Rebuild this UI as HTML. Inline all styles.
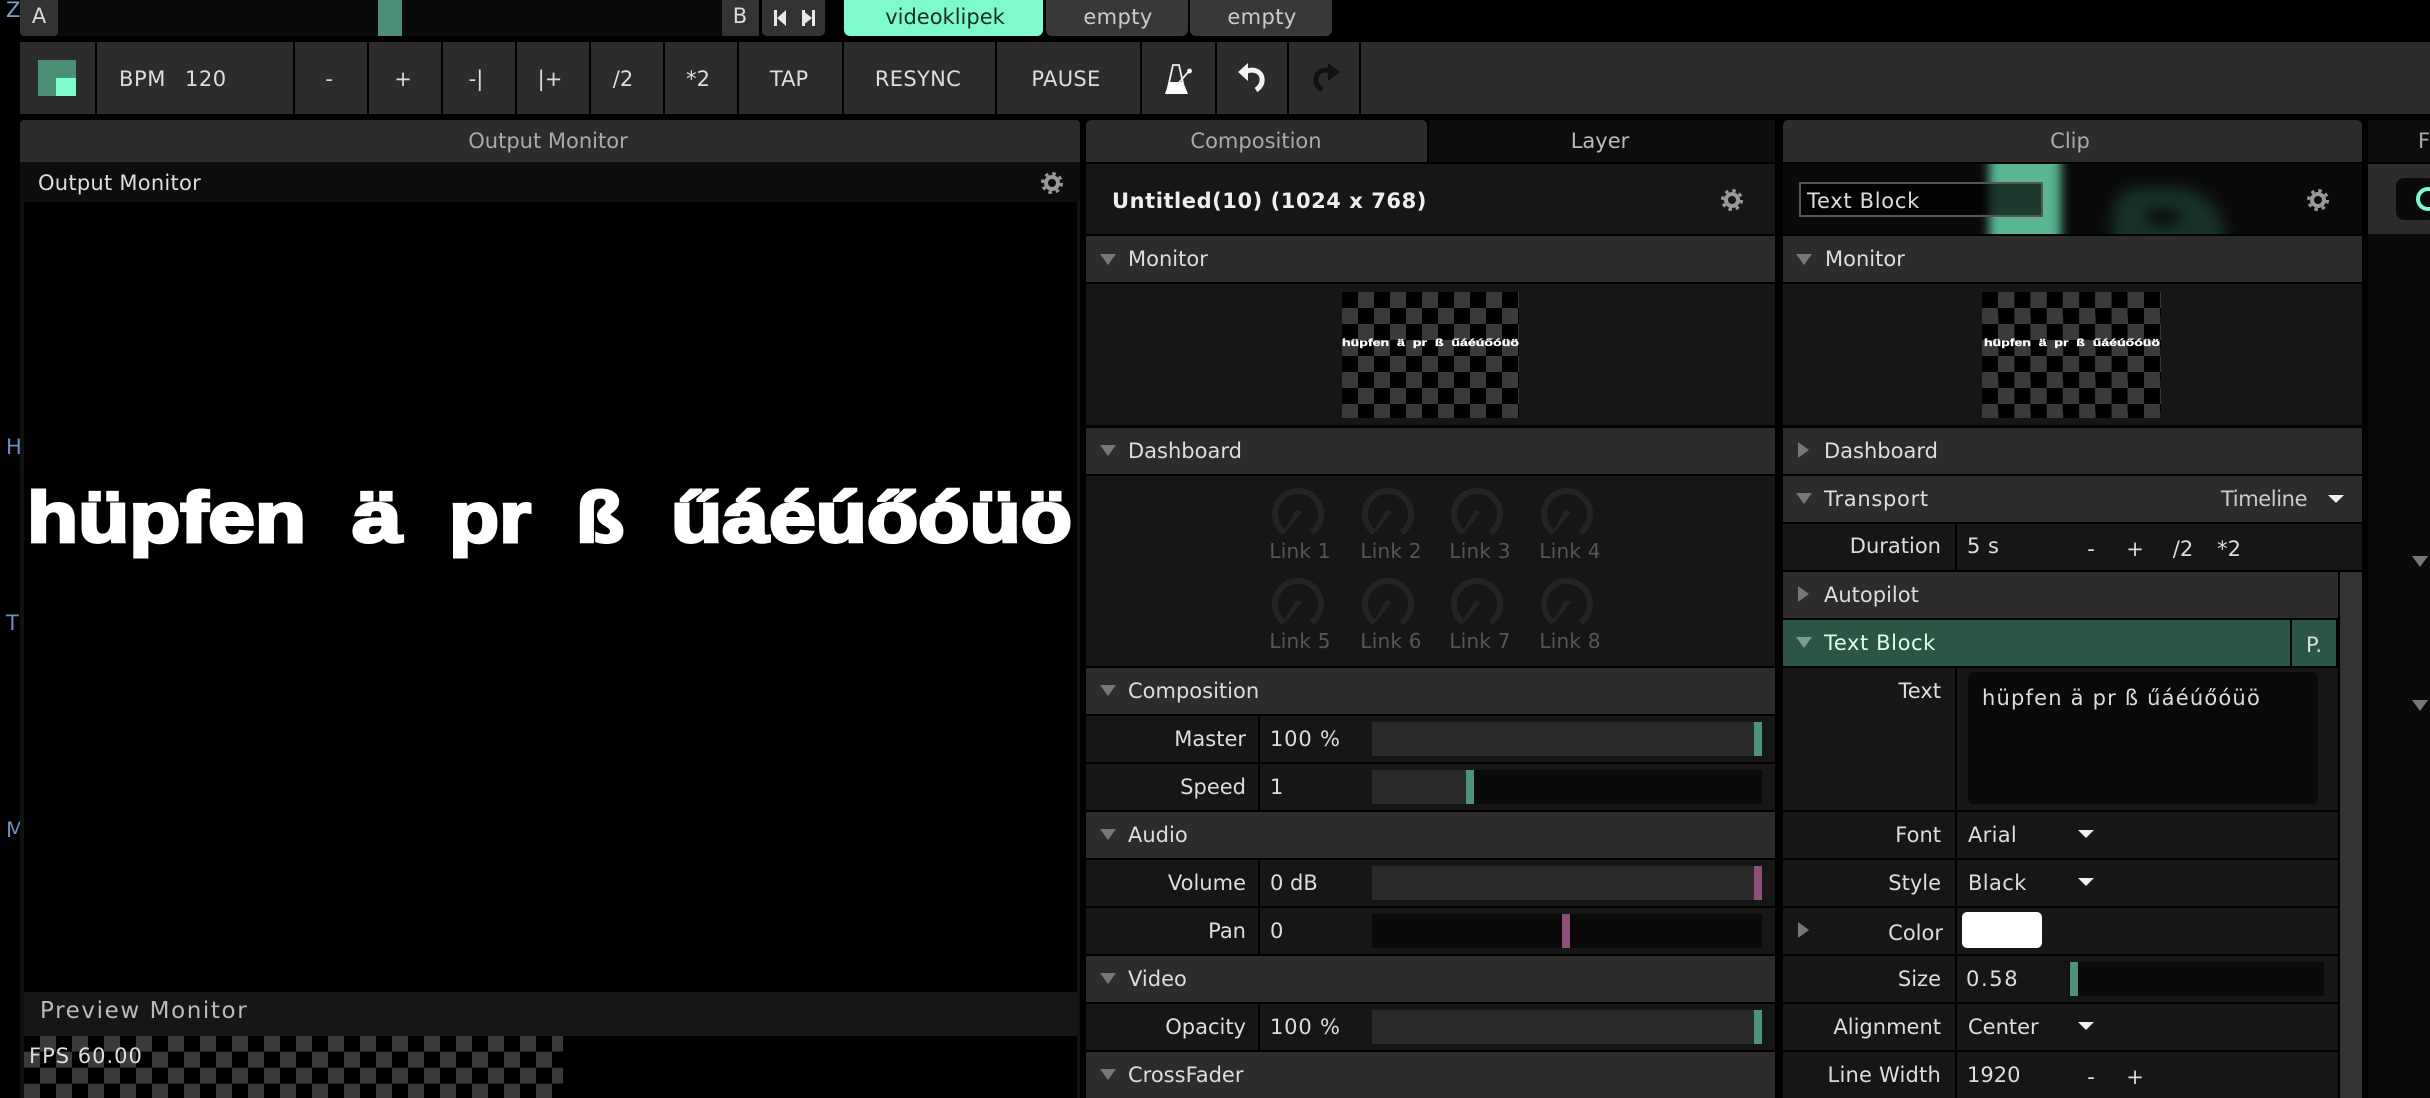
<!DOCTYPE html>
<html lang="en"><head><meta charset="utf-8"><title>Resolume</title>
<style>
html,body{margin:0;padding:0;background:#000}
body{position:relative;width:2430px;height:1098px;overflow:hidden;font-family:"DejaVu Sans","Liberation Sans",sans-serif;font-size:21px;color:#ddd}
div,svg{position:absolute}
.t{height:40px;line-height:40px;white-space:nowrap;margin-top:1px}
.c{transform:translateX(-50%)}
.h{background:#2c2c2c;height:46px}
.b{background:#161616;height:46px}
.tr{width:16px;height:11px;background:#777;clip-path:polygon(0 0,100% 0,50% 100%)}
.tp{width:11px;height:16px;background:#777;clip-path:polygon(0 0,100% 50%,0 100%)}
.dd{width:16px;height:8px;background:#eee;clip-path:polygon(0 0,100% 0,50% 100%)}
.s{width:2px;background:#000}
.sl{height:34px;background:#0a0a0a;overflow:hidden}
.k{width:8px;height:34px;top:0;background:#4e9278}
.p{background:#8f4f79}
.chk{background:conic-gradient(#3a3a3a 25%,#000 0 50%,#3a3a3a 0 75%,#000 0) 0 0/32px 32px}
.lk{color:#565656}
</style></head><body>

<!-- left clipped fragments -->
<div style="left:0;top:0;width:20px;height:1098px;overflow:hidden">
<div class="t" style="left:6px;top:-11px;color:#7c9fd0">Z</div>
<div class="t" style="left:6px;top:426px;color:#6f8fc0">H</div>
<div class="t" style="left:6px;top:602px;color:#6f8fc0">T</div>
<div class="t" style="left:6px;top:809px;color:#6f8fc0">M</div>
</div>

<!-- top bar -->
<div style="left:58px;top:0;width:664px;height:36px;background:#0a0a0a"></div>
<div style="left:20px;top:0;width:38px;height:36px;background:#333;border-radius:0 0 4px 4px"></div>
<div class="t c" style="left:39px;top:-5px">A</div>
<div style="left:378px;top:0;width:24px;height:36px;background:#4d8f76"></div>
<div style="left:722px;top:0;width:37px;height:36px;background:#333"></div>
<div class="t c" style="left:740px;top:-5px">B</div>
<div style="left:762px;top:0;width:63px;height:36px;background:#333;border-radius:0 0 5px 5px"></div>
<svg style="left:770px;top:6px" width="50" height="24" viewBox="0 0 50 24"><path d="M4 4h3v16H4zM16 4v16L7 12zM32 4h3v16h-3zM42 4v16h3V4zM32 4l10 8-10 8z" fill="#e8e8e8"/></svg>
<div style="left:844px;top:0;width:199px;height:36px;background:#7dfbcb;border-radius:0 0 6px 6px"></div>
<div class="t c" style="left:945px;top:-4px;color:#1c2b26">videoklipek</div>
<div style="left:1046px;top:0;width:142px;height:36px;background:#383838;border-radius:0 0 6px 6px"></div>
<div class="t c" style="left:1118px;top:-4px;color:#ccc;letter-spacing:.4px">empty</div>
<div style="left:1190px;top:0;width:142px;height:36px;background:#383838;border-radius:0 0 6px 6px"></div>
<div class="t c" style="left:1262px;top:-4px;color:#ccc;letter-spacing:.4px">empty</div>

<!-- toolbar -->
<div style="left:20px;top:42px;width:2410px;height:72px;background:#2c2c2c"></div>
<div class="s" style="left:95px;top:42px;height:72px"></div>
<div class="s" style="left:293px;top:42px;height:72px"></div>
<div class="s" style="left:367px;top:42px;height:72px"></div>
<div class="s" style="left:441px;top:42px;height:72px"></div>
<div class="s" style="left:515px;top:42px;height:72px"></div>
<div class="s" style="left:589px;top:42px;height:72px"></div>
<div class="s" style="left:663px;top:42px;height:72px"></div>
<div class="s" style="left:737px;top:42px;height:72px"></div>
<div class="s" style="left:842px;top:42px;height:72px"></div>
<div class="s" style="left:995px;top:42px;height:72px"></div>
<div class="s" style="left:1140px;top:42px;height:72px"></div>
<div class="s" style="left:1215px;top:42px;height:72px"></div>
<div class="s" style="left:1287px;top:42px;height:72px"></div>
<div class="s" style="left:1359px;top:42px;height:72px"></div>
<div style="left:38px;top:60px;width:38px;height:36px;background:#4d8f76"></div>
<div style="left:56px;top:78px;width:20px;height:18px;background:#7ffccb"></div>
<div class="t" style="left:119px;top:58px;letter-spacing:.6px">BPM</div>
<div class="t" style="left:185px;top:58px;letter-spacing:.5px">120</div>
<div class="t c" style="left:329px;top:58px">-</div>
<div class="t c" style="left:403px;top:58px">+</div>
<div class="t c" style="left:476px;top:58px">-|</div>
<div class="t c" style="left:550px;top:58px">|+</div>
<div class="t c" style="left:623px;top:58px">/2</div>
<div class="t c" style="left:698px;top:58px">*2</div>
<div class="t c" style="left:789px;top:58px">TAP</div>
<div class="t c" style="left:918px;top:58px;letter-spacing:.3px">RESYNC</div>
<div class="t c" style="left:1066px;top:58px;letter-spacing:.3px">PAUSE</div>
<svg style="left:1160px;top:60px" width="36" height="38" viewBox="0 0 36 38"><path d="M13 5h6l6 27H7z" fill="none" stroke="#eee" stroke-width="1.800"/><path d="M9 22h14l5 12H5z" fill="#fff"/><path d="M16 26L30 10" stroke="#eee" stroke-width="1.800"/><circle cx="29.500" cy="11" r="2.400" fill="#fff"/></svg>
<svg style="left:1234px;top:60px" width="36" height="36" viewBox="0 0 36 36"><path d="M13 11c8-2.500 14 1 15 7 .7 5-1.500 9-6 12" fill="none" stroke="#f2f2f2" stroke-width="5"/><path d="M14 3v18L4 12z" fill="#f2f2f2"/></svg>
<svg style="left:1308px;top:60px" width="36" height="36" viewBox="0 0 36 36"><path d="M23 11c-8-2.500-14 1-15 7-.7 5 1.500 9 6 12" fill="none" stroke="#111" stroke-width="5"/><path d="M20 3v18l12-9z" fill="#111"/></svg>

<!-- output monitor -->
<div style="left:20px;top:120px;width:1060px;height:42px;background:#2c2c2c;border-radius:4px 4px 0 0"></div>
<div class="t c" style="left:548px;top:120px;color:#aaa">Output Monitor</div>
<div style="left:20px;top:162px;width:1060px;height:936px;background:#111"></div>
<div style="left:20px;top:162px;width:1060px;height:40px;background:#0d0d0d"></div>
<div class="t" style="left:38px;top:162px;color:#ddd;letter-spacing:.25px">Output Monitor</div>
<svg style="left:1040px;top:171px" width="24" height="24" viewBox="0 0 24 24"><circle cx="12" cy="12" r="6" fill="none" stroke="#999" stroke-width="4"/><circle cx="12" cy="12" r="9.500" fill="none" stroke="#999" stroke-width="3" stroke-dasharray="3.500 3.960"/></svg>
<div style="left:24px;top:202px;width:1053px;height:790px;background:#000"></div>
<div style="left:24px;top:992px;width:1053px;height:44px;background:#161616"></div>
<div class="t" style="left:40px;top:990px;color:#bbb;font-size:23px;letter-spacing:1.600px">Preview Monitor</div>
<div style="left:24px;top:1036px;width:1053px;height:62px;background:#000"></div>
<div class="chk" style="left:24px;top:1036px;width:539px;height:62px"></div>
<div style="left:24px;top:1036px;width:539px;height:62px;background:repeating-linear-gradient(180deg,transparent 0 15px,rgba(20,20,20,.7) 15px 16px)"></div>
<div class="t" style="left:29px;top:1035px;color:#ddd;letter-spacing:1px">FPS 60.00</div>
<svg style="left:0;top:0" width="1090" height="600" font-family="Liberation Sans,Arial,sans-serif" font-weight="700" font-size="71" fill="#fff" stroke="#fff" stroke-width="3">
<text x="27" y="542" textLength="279" lengthAdjust="spacingAndGlyphs">hüpfen</text>
<text x="352" y="542" textLength="50" lengthAdjust="spacingAndGlyphs">ä</text>
<text x="449" y="542" textLength="82" lengthAdjust="spacingAndGlyphs">pr</text>
<text x="576" y="542" textLength="48" lengthAdjust="spacingAndGlyphs">ß</text>
<text x="671" y="542" textLength="401" lengthAdjust="spacingAndGlyphs">űáéúőóüö</text>
</svg>

<!-- composition panel -->
<div style="left:1086px;top:120px;width:341px;height:42px;background:#2c2c2c;border-radius:5px 5px 0 0"></div>
<div class="t c" style="left:1256px;top:120px;color:#aaa">Composition</div>
<div style="left:1429px;top:120px;width:346px;height:42px;background:#0d0d0d"></div>
<div class="t c" style="left:1600px;top:120px;color:#bbb">Layer</div>
<div class="b" style="left:1086px;top:164px;width:689px;height:70px"></div>
<div class="t" style="left:1112px;top:180px;font-weight:700;color:#eee;letter-spacing:.55px">Untitled(10) (1024 x 768)</div>
<svg style="left:1720px;top:188px" width="24" height="24" viewBox="0 0 24 24"><circle cx="12" cy="12" r="6" fill="none" stroke="#999" stroke-width="4"/><circle cx="12" cy="12" r="9.500" fill="none" stroke="#999" stroke-width="3" stroke-dasharray="3.500 3.960"/></svg>
<div class="h" style="left:1086px;top:236px;width:689px"></div>
<div class="tr" style="left:1100px;top:254px"></div>
<div class="t" style="left:1128px;top:238px">Monitor</div>
<div class="b" style="left:1086px;top:284px;width:689px;height:141px"></div>
<div class="chk" style="left:1342px;top:292px;width:177px;height:126px"></div>
<svg style="left:1342px;top:334px" width="178" height="16"><text x="0" y="12" textLength="177" lengthAdjust="spacingAndGlyphs" font-family="Liberation Sans,sans-serif" font-weight="700" font-size="10" stroke="#fff" stroke-width=".3" fill="#fff">hüpfen&#160;&#160;ä&#160;&#160;pr&#160;&#160;ß&#160;&#160;űáéúőóüö</text></svg>

<div class="h" style="left:1086px;top:428px;width:689px"></div>
<div class="tr" style="left:1100px;top:445px"></div>
<div class="t" style="left:1128px;top:430px">Dashboard</div>
<div class="b" style="left:1086px;top:476px;width:689px;height:190px"></div>
<svg style="left:1268px;top:484px" width="330" height="150" viewBox="0 0 330 150" fill="#242424"><g><path d="M16.500 48.600A23 23 0 1 1 43.500 48.600" fill="none" stroke="#242424" stroke-width="6"/><path d="M28 26l6 2-16 20-2-1z"/></g><g transform="translate(90 0)"><path d="M16.500 48.600A23 23 0 1 1 43.500 48.600" fill="none" stroke="#242424" stroke-width="6"/><path d="M28 26l6 2-16 20-2-1z"/></g><g transform="translate(179 0)"><path d="M16.500 48.600A23 23 0 1 1 43.500 48.600" fill="none" stroke="#242424" stroke-width="6"/><path d="M28 26l6 2-16 20-2-1z"/></g><g transform="translate(269 0)"><path d="M16.500 48.600A23 23 0 1 1 43.500 48.600" fill="none" stroke="#242424" stroke-width="6"/><path d="M28 26l6 2-16 20-2-1z"/></g><g transform="translate(0 90)"><path d="M16.500 48.600A23 23 0 1 1 43.500 48.600" fill="none" stroke="#242424" stroke-width="6"/><path d="M28 26l6 2-16 20-2-1z"/></g><g transform="translate(90 90)"><path d="M16.500 48.600A23 23 0 1 1 43.500 48.600" fill="none" stroke="#242424" stroke-width="6"/><path d="M28 26l6 2-16 20-2-1z"/></g><g transform="translate(179 90)"><path d="M16.500 48.600A23 23 0 1 1 43.500 48.600" fill="none" stroke="#242424" stroke-width="6"/><path d="M28 26l6 2-16 20-2-1z"/></g><g transform="translate(269 90)"><path d="M16.500 48.600A23 23 0 1 1 43.500 48.600" fill="none" stroke="#242424" stroke-width="6"/><path d="M28 26l6 2-16 20-2-1z"/></g></svg>
<div class="t lk c" style="left:1300px;top:530px;font-size:20px;letter-spacing:.2px">Link 1</div>
<div class="t lk c" style="left:1391px;top:530px;font-size:20px;letter-spacing:.2px">Link 2</div>
<div class="t lk c" style="left:1480px;top:530px;font-size:20px;letter-spacing:.2px">Link 3</div>
<div class="t lk c" style="left:1570px;top:530px;font-size:20px;letter-spacing:.2px">Link 4</div>
<div class="t lk c" style="left:1300px;top:620px;font-size:20px;letter-spacing:.2px">Link 5</div>
<div class="t lk c" style="left:1391px;top:620px;font-size:20px;letter-spacing:.2px">Link 6</div>
<div class="t lk c" style="left:1480px;top:620px;font-size:20px;letter-spacing:.2px">Link 7</div>
<div class="t lk c" style="left:1570px;top:620px;font-size:20px;letter-spacing:.2px">Link 8</div>

<div class="h" style="left:1086px;top:668px;width:689px"></div>
<div class="tr" style="left:1100px;top:685px"></div>
<div class="t" style="left:1128px;top:670px">Composition</div>

<div class="b" style="left:1086px;top:716px;width:689px"></div>
<div class="s" style="left:1258px;top:716px;height:46px"></div>
<div class="t" style="right:1184px;top:718px">Master</div>
<div class="t" style="left:1270px;top:718px;letter-spacing:.8px">100 %</div>
<div class="sl" style="left:1372px;top:722px;width:390px;background:#2a2a2a"><div class="k" style="left:382px"></div></div>

<div class="b" style="left:1086px;top:764px;width:689px"></div>
<div class="s" style="left:1258px;top:764px;height:46px"></div>
<div class="t" style="right:1184px;top:766px">Speed</div>
<div class="t" style="left:1270px;top:766px">1</div>
<div class="sl" style="left:1372px;top:770px;width:390px"><div style="left:0;top:0;width:94px;height:34px;background:#2a2a2a"></div><div class="k" style="left:94px"></div></div>

<div class="h" style="left:1086px;top:812px;width:689px"></div>
<div class="tr" style="left:1100px;top:829px"></div>
<div class="t" style="left:1128px;top:814px">Audio</div>

<div class="b" style="left:1086px;top:860px;width:689px"></div>
<div class="s" style="left:1258px;top:860px;height:46px"></div>
<div class="t" style="right:1184px;top:862px">Volume</div>
<div class="t" style="left:1270px;top:862px">0 dB</div>
<div class="sl" style="left:1372px;top:866px;width:390px;background:#2a2a2a"><div class="k p" style="left:382px"></div></div>

<div class="b" style="left:1086px;top:908px;width:689px"></div>
<div class="s" style="left:1258px;top:908px;height:46px"></div>
<div class="t" style="right:1184px;top:910px">Pan</div>
<div class="t" style="left:1270px;top:910px">0</div>
<div class="sl" style="left:1372px;top:914px;width:390px"><div class="k p" style="left:190px"></div></div>

<div class="h" style="left:1086px;top:956px;width:689px"></div>
<div class="tr" style="left:1100px;top:973px"></div>
<div class="t" style="left:1128px;top:958px">Video</div>

<div class="b" style="left:1086px;top:1004px;width:689px"></div>
<div class="s" style="left:1258px;top:1004px;height:46px"></div>
<div class="t" style="right:1184px;top:1006px">Opacity</div>
<div class="t" style="left:1270px;top:1006px;letter-spacing:.8px">100 %</div>
<div class="sl" style="left:1372px;top:1010px;width:390px;background:#2a2a2a"><div class="k" style="left:382px"></div></div>

<div class="h" style="left:1086px;top:1052px;width:689px"></div>
<div class="tr" style="left:1100px;top:1069px"></div>
<div class="t" style="left:1128px;top:1054px">CrossFader</div>

<!-- clip panel -->
<div style="left:1783px;top:120px;width:579px;height:42px;background:#2c2c2c;border-radius:5px 5px 0 0"></div>
<div class="t c" style="left:2070px;top:120px;color:#aaa">Clip</div>
<div style="left:1783px;top:164px;width:579px;height:70px;background:#0a0a0a;overflow:hidden">
<div style="left:206px;top:-14px;width:72px;height:100px;background:#5ab592;filter:blur(5px)"></div>
<div style="left:330px;top:24px;width:112px;height:70px;background:#183229;border-radius:26px 50px 0 0;filter:blur(7px)"></div>
<div style="left:362px;top:44px;width:36px;height:18px;background:#0a0f0d;border-radius:50%;filter:blur(6px)"></div>
</div>
<div style="left:1799px;top:182px;width:240px;height:31px;border:2px solid #565656;background:rgba(0,0,0,.68)"></div>
<div class="t" style="left:1807px;top:180px;color:#ddd;letter-spacing:.7px">Text Block</div>
<svg style="left:2306px;top:188px" width="24" height="24" viewBox="0 0 24 24"><circle cx="12" cy="12" r="6" fill="none" stroke="#999" stroke-width="4"/><circle cx="12" cy="12" r="9.500" fill="none" stroke="#999" stroke-width="3" stroke-dasharray="3.500 3.960"/></svg>

<div class="h" style="left:1783px;top:236px;width:579px"></div>
<div class="tr" style="left:1796px;top:254px"></div>
<div class="t" style="left:1825px;top:238px">Monitor</div>
<div class="b" style="left:1783px;top:284px;width:579px;height:141px"></div>
<div class="chk" style="left:1982px;top:292px;width:179px;height:126px;background-size:32.400px 32px"></div>
<svg style="left:1982px;top:334px" width="180" height="16"><text x="2" y="12" textLength="176" lengthAdjust="spacingAndGlyphs" font-family="Liberation Sans,sans-serif" font-weight="700" font-size="10" stroke="#fff" stroke-width=".3" fill="#fff">hüpfen&#160;&#160;ä&#160;&#160;pr&#160;&#160;ß&#160;&#160;űáéúőóüö</text></svg>

<div class="h" style="left:1783px;top:428px;width:579px"></div>
<div class="tp" style="left:1798px;top:442px"></div>
<div class="t" style="left:1824px;top:430px">Dashboard</div>

<div class="h" style="left:1783px;top:476px;width:579px"></div>
<div class="tr" style="left:1796px;top:493px"></div>
<div class="t" style="left:1824px;top:478px;letter-spacing:.7px">Transport</div>
<div class="t" style="left:2221px;top:478px;color:#ccc;letter-spacing:-.4px">Timeline</div>
<div class="dd" style="left:2328px;top:495px"></div>

<div class="b" style="left:1783px;top:524px;width:579px"></div>
<div class="s" style="left:1955px;top:524px;height:46px"></div>
<div class="t" style="right:489px;top:525px">Duration</div>
<div class="t" style="left:1967px;top:525px;letter-spacing:.5px">5 s</div>
<div class="t c" style="left:2091px;top:528px">-</div>
<div class="t c" style="left:2135px;top:528px">+</div>
<div class="t c" style="left:2183px;top:528px">/2</div>
<div class="t c" style="left:2229px;top:528px">*2</div>

<div style="left:2340px;top:572px;width:22px;height:526px;background:#333"></div>
<div class="h" style="left:1783px;top:572px;width:555px"></div>
<div class="tp" style="left:1798px;top:586px"></div>
<div class="t" style="left:1824px;top:574px">Autopilot</div>

<div class="h" style="left:1783px;top:620px;width:507px;background:#2b5545"></div>
<div class="h" style="left:2292px;top:620px;width:44px;background:#2b5545"></div>
<div class="tr" style="left:1796px;top:637px;background:#7d9a8e"></div>
<div class="t" style="left:1824px;top:622px;color:#dfe;letter-spacing:.6px">Text Block</div>
<div class="t c" style="left:2314px;top:624px">P.</div>

<div class="b" style="left:1783px;top:668px;width:555px;height:142px"></div>
<div class="s" style="left:1955px;top:668px;height:142px"></div>
<div class="t" style="right:489px;top:670px">Text</div>
<div style="left:1968px;top:672px;width:350px;height:132px;background:#090909;border-radius:5px"></div>
<div class="t" style="left:1982px;top:677px;letter-spacing:1.2px">hüpfen ä pr ß űáéúőóüö</div>

<div class="b" style="left:1783px;top:812px;width:555px"></div>
<div class="s" style="left:1955px;top:812px;height:46px"></div>
<div class="t" style="right:489px;top:814px">Font</div>
<div class="t" style="left:1968px;top:814px;letter-spacing:.3px">Arial</div>
<div class="dd" style="left:2078px;top:830px"></div>

<div class="b" style="left:1783px;top:860px;width:555px"></div>
<div class="s" style="left:1955px;top:860px;height:46px"></div>
<div class="t" style="right:489px;top:862px">Style</div>
<div class="t" style="left:1968px;top:862px;letter-spacing:.4px">Black</div>
<div class="dd" style="left:2078px;top:878px"></div>

<div class="b" style="left:1783px;top:908px;width:555px"></div>
<div class="s" style="left:1955px;top:908px;height:46px"></div>
<div class="tp" style="left:1798px;top:922px"></div>
<div class="t" style="right:487px;top:912px">Color</div>
<div style="left:1962px;top:912px;width:80px;height:36px;background:#fff;border-radius:5px"></div>

<div class="b" style="left:1783px;top:956px;width:555px"></div>
<div class="s" style="left:1955px;top:956px;height:46px"></div>
<div class="t" style="right:489px;top:958px">Size</div>
<div class="t" style="left:1966px;top:958px;letter-spacing:1.6px">0.58</div>
<div class="sl" style="left:2069px;top:962px;width:255px"><div class="k" style="left:1px"></div></div>

<div class="b" style="left:1783px;top:1004px;width:555px"></div>
<div class="s" style="left:1955px;top:1004px;height:46px"></div>
<div class="t" style="right:489px;top:1006px">Alignment</div>
<div class="t" style="left:1968px;top:1006px">Center</div>
<div class="dd" style="left:2078px;top:1022px"></div>

<div class="b" style="left:1783px;top:1052px;width:555px"></div>
<div class="s" style="left:1955px;top:1052px;height:46px"></div>
<div class="t" style="right:489px;top:1054px;letter-spacing:.2px">Line Width</div>
<div class="t" style="left:1967px;top:1054px">1920</div>
<div class="t c" style="left:2091px;top:1056px">-</div>
<div class="t c" style="left:2135px;top:1056px">+</div>

<!-- right panel -->
<div style="left:2368px;top:120px;width:62px;height:42px;background:#0d0d0d"></div>
<div class="t" style="left:2418px;top:120px;color:#aaa">F</div>
<div style="left:2368px;top:164px;width:62px;height:70px;background:#2c2c2c"></div>
<div style="left:2396px;top:178px;width:40px;height:42px;background:#0a0a0a;border-radius:8px"></div>
<div style="left:2416px;top:187px;width:24px;height:24px;border:4px solid #7dfbcb;border-radius:50%;box-sizing:border-box"></div>
<div style="left:2368px;top:234px;width:62px;height:864px;background:#0a0a0a"></div>
<div class="tr" style="left:2412px;top:556px"></div>
<div class="tr" style="left:2412px;top:700px"></div>

</body></html>
